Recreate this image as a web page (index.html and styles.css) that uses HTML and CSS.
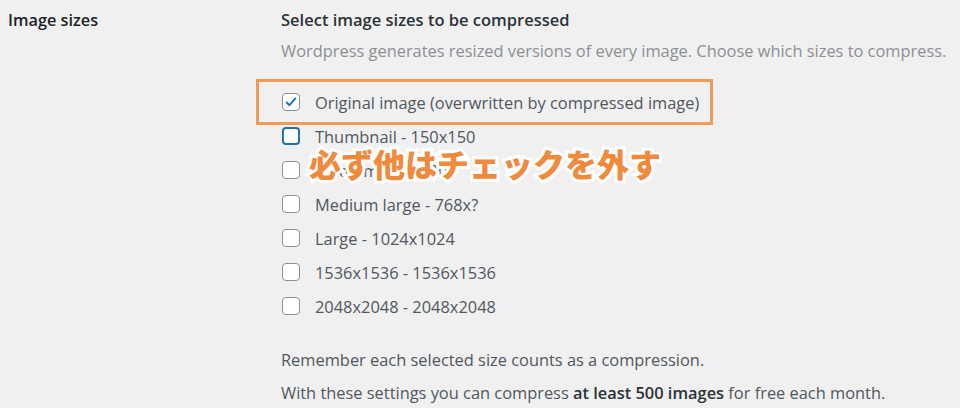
FILE: index.html
```html
<!DOCTYPE html>
<html lang="en">
<head>
<meta charset="utf-8">
<link rel="stylesheet" href="styles.css">
</head>
<body>
<div class="settings">
  <div class="th">Image sizes</div>
  <div class="td">
    <div class="heading">Select image sizes to be compressed</div>
    <p class="desc">Wordpress generates resized versions of every image. Choose which sizes to compress.</p>
    <ul class="sizes">
      <li><span class="cb checked"><svg viewBox="0 0 20 20" width="16" height="16"><path d="M4.5 10.5l3.5 3.5 7.5-8.5" fill="none" stroke="#2271b1" stroke-width="2.4" stroke-linecap="round" stroke-linejoin="round"/></svg></span><span class="lbl">Original image (overwritten by compressed image)</span></li>
      <li><span class="cb focus"></span><span class="lbl">Thumbnail - 150x150</span></li>
      <li><span class="cb"></span><span class="lbl">Medium - 300x300</span></li>
      <li><span class="cb"></span><span class="lbl">Medium large - 768x?</span></li>
      <li><span class="cb"></span><span class="lbl">Large - 1024x1024</span></li>
      <li><span class="cb"></span><span class="lbl">1536x1536 - 1536x1536</span></li>
      <li><span class="cb"></span><span class="lbl">2048x2048 - 2048x2048</span></li>
      <div class="mark-box"></div>
      <div class="note">必ず他はチェックを外す</div>
    </ul>
    <p class="info">Remember each selected size counts as a compression.</p>
    <p class="info">With these settings you can compress <strong>at least 500 images</strong> for free each month.</p>
  </div>
</div>
</body>
</html>
```
FILE: styles.css
```css
html, body {
  margin: 0;
  padding: 0;
  background: #f0f0f1;
}
body {
  width: 960px;
  height: 408px;
  overflow: hidden;
  font-family: "Open Sans", "Noto Sans", sans-serif;
  color: #3c434a;
}
.settings {
  display: flex;
  padding-top: 8px;
}
.th {
  width: 281px;
  padding-left: 8px;
  box-sizing: border-box;
  font-weight: 600;
  font-size: 16.3px;
  line-height: 24px;
  color: #1d2327;
}
.td {
  flex: 1;
}
.heading {
  font-weight: 600;
  font-size: 16.5px;
  line-height: 24px;
  color: #2c3338;
}
.desc {
  margin: 7px 0 0;
  font-size: 16.4px;
  line-height: 24px;
  color: #8c8f94;
}
.sizes {
  position: relative;
  list-style: none;
  margin: 22px 0 0;
  padding: 0;
}
.sizes li {
  display: flex;
  align-items: center;
  height: 34px;
}
.cb {
  width: 18px;
  height: 18px;
  box-sizing: border-box;
  border: 1px solid #8c8f94;
  border-radius: 4px;
  background: #fff;
  margin-left: 1px;
  display: flex;
  align-items: center;
  justify-content: center;
}
.cb.focus {
  border: 2px solid #2271b1;
}
.lbl {
  margin-left: 15px;
  font-size: 16.4px;
  color: #50575e;
}
.mark-box {
  position: absolute;
  left: -25px;
  top: -6px;
  width: 457px;
  height: 46px;
  box-sizing: border-box;
  border: 3px solid #f39a55;
}
.note {
  position: absolute;
  left: 28px;
  top: 58px;
  font-family: "Noto Sans CJK JP", sans-serif;
  font-weight: 900;
  font-size: 32px;
  line-height: 40px;
  color: #f08a3c;
  -webkit-text-stroke: 6px #fff;
  paint-order: stroke fill;
}
.info {
  margin: 0;
  font-size: 16.4px;
  line-height: 33px;
  color: #50575e;
}
.sizes + .info {
  margin-top: 20px;
}
.info strong {
  font-weight: 600;
  color: #2c3338;
}
```
